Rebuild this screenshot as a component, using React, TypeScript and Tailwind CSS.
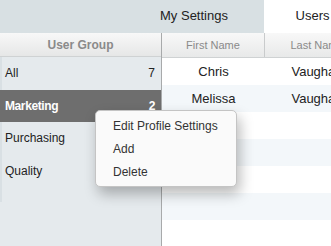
const groups = [
  { name: 'All', count: 7 },
  { name: 'Marketing', count: 2, selected: true },
  { name: 'Purchasing' },
  { name: 'Quality' },
];

const users = [
  { first: 'Chris', last: 'Vaughan' },
  { first: 'Melissa', last: 'Vaughan' },
  { first: '', last: '' },
  { first: '', last: '' },
  { first: '', last: '' },
  { first: '', last: '' },
  { first: '', last: '' },
];

export default function App() {
  return (
    <div className="relative w-[331px] h-[246px] overflow-hidden bg-white font-['Liberation_Sans',Arial,sans-serif] text-[#222]">
      {/* Tabs */}
      <div className="flex h-[33px] bg-[#d8e0e3] whitespace-nowrap">
        <div className="w-[124px] shrink-0" />
        <div className="w-[140px] shrink-0 flex items-center justify-center text-[13px] pb-[1px]">My Settings</div>
        <div className="w-[97px] shrink-0 flex items-center justify-center bg-white text-[13px] pb-[1px]">Users</div>
      </div>

      <div className="flex h-[213px]">
        {/* User groups */}
        <div className="w-[162px] shrink-0 bg-[#e5eaed] border-r border-[#a8aaab] flex flex-col">
          <div className="h-[24px] border-b border-[#cfd2d3] bg-gradient-to-b from-[#f8f8f8] to-[#e6e7e7] flex items-center justify-center text-[12px] font-bold text-[#8a8a8a]">
            User Group
          </div>
          <div className="min-h-[145px] border-l-2 border-[#d9e0e4]">
            {groups.map((g) => (
              <div
                key={g.name}
                className={
                  g.selected
                    ? 'h-[32.5px] -ml-[2px] pl-[5px] pr-[6px] flex items-center justify-between bg-[#6e6e6e] text-white font-bold text-[12px] tracking-[-0.4px]'
                    : 'h-[32.5px] pl-[3px] pr-[6px] flex items-center justify-between text-[12px]'
                }
              >
                <span>{g.name}</span>
                {g.count !== undefined && <span>{g.count}</span>}
              </div>
            ))}
          </div>
        </div>

        {/* Users grid */}
        <div className="flex-1 flex flex-col whitespace-nowrap">
          <div className="h-[25px] shrink-0 flex border-b border-[#cfd2d3] bg-gradient-to-b from-[#f8f8f8] to-[#e8e9e9] text-[11px] text-[#8a8a8a]">
            <div className="w-[103px] shrink-0 border-r border-[#c9cbcc] flex items-center justify-center">First Name</div>
            <div className="w-[104px] shrink-0 flex items-center justify-center">Last Name</div>
          </div>
          {users.map((u, i) => (
            <div key={i} className={`h-[27px] shrink-0 flex text-[13px] ${i % 2 === 1 ? 'bg-[#f3f7fa]' : 'bg-white'}`}>
              <div className="w-[103px] shrink-0 flex items-center justify-center">{u.first}</div>
              <div className="w-[104px] shrink-0 flex items-center justify-center">{u.last}</div>
            </div>
          ))}
        </div>
      </div>

      {/* Context menu */}
      <div className="absolute left-[95px] top-[110px] w-[142px] h-[77px] rounded-[5px] border border-[#c4c4c4] bg-[#fafafa] py-[3px] shadow-[3px_7px_14px_rgba(0,0,0,0.28)] text-[12px] text-[#333]">
        {['Edit Profile Settings', 'Add', 'Delete'].map((item) => (
          <div key={item} className="h-[23px] pl-[17px] flex items-center whitespace-nowrap">
            {item}
          </div>
        ))}
      </div>
    </div>
  );
}
